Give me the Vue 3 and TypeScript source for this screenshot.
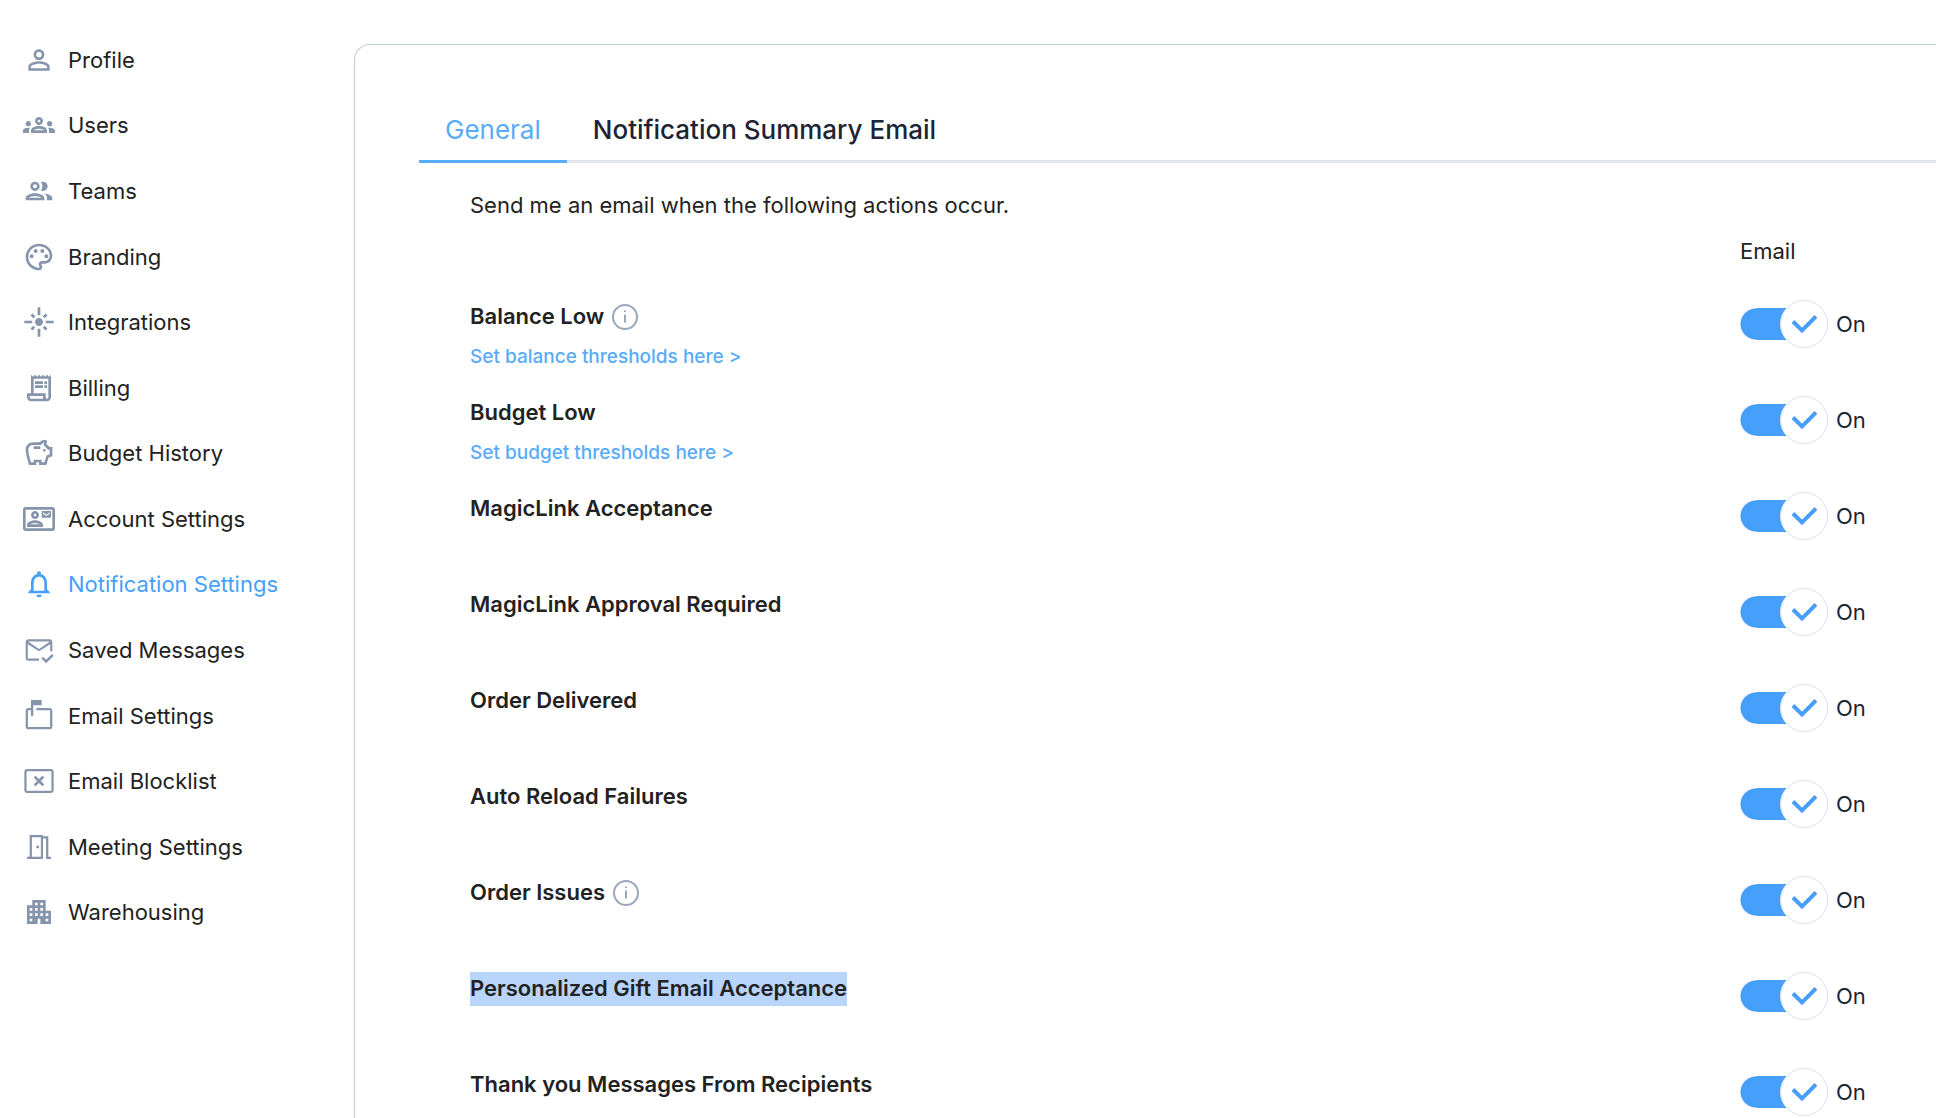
<script setup lang="ts">
import { ref } from 'vue'

interface NavItem {
  label: string
  paths: string[]
}

interface Setting {
  title: string
  link?: string
  info?: boolean
  selected?: boolean
  on: boolean
}

const activeNav = ref('Notification Settings')
const activeTab = ref('General')
const tabs = ['General', 'Notification Summary Email']

const navItems: NavItem[] = [
  {
    label: 'Profile',
    paths: [
      'M12 5.9c1.16 0 2.1.94 2.1 2.1s-.94 2.1-2.1 2.1S9.9 9.16 9.9 8s.94-2.1 2.1-2.1m0 9c2.97 0 6.1 1.46 6.1 2.1v1.1H5.9V17c0-.64 3.13-2.1 6.1-2.1M12 4C9.79 4 8 5.79 8 8s1.79 4 4 4 4-1.79 4-4-1.79-4-4-4zm0 9c-2.67 0-8 1.34-8 4v3h16v-3c0-2.66-5.33-4-8-4z',
    ],
  },
  {
    label: 'Users',
    paths: [
      'M4 13c1.1 0 2-.9 2-2s-.9-2-2-2-2 .9-2 2 .9 2 2 2zm1.13 1.1c-.37-.06-.74-.1-1.13-.1-.99 0-1.93.21-2.78.58C.48 14.9 0 15.62 0 16.43V18h4.5v-1.61c0-.83.23-1.61.63-2.29z',
      'M20 13c1.1 0 2-.9 2-2s-.9-2-2-2-2 .9-2 2 .9 2 2 2zm4 3.43c0-.81-.48-1.53-1.22-1.85-.85-.37-1.79-.58-2.78-.58-.39 0-.76.04-1.13.1.4.68.63 1.46.63 2.29V18H24v-1.57z',
      'M16.24 13.65c-1.17-.52-2.61-.9-4.24-.9-1.63 0-3.07.39-4.24.9C6.68 14.13 6 15.21 6 16.39V18h12v-1.61c0-1.18-.68-2.26-1.76-2.74zM8.07 16c.09-.23.13-.39.91-.69.97-.38 1.99-.56 3.02-.56s2.05.18 3.02.56c.77.3.81.46.91.69H8.07zM12 8c.55 0 1 .45 1 1s-.45 1-1 1-1-.45-1-1 .45-1 1-1m0-2c-1.66 0-3 1.34-3 3s1.34 3 3 3 3-1.34 3-3-1.34-3-3-3z',
    ],
  },
  {
    label: 'Teams',
    paths: [
      'M9 13.75c-2.34 0-7 1.17-7 3.5V19h14v-1.75c0-2.33-4.66-3.5-7-3.5zM4.34 17c.84-.58 2.87-1.25 4.66-1.25s3.82.67 4.66 1.25H4.34zM9 12c1.93 0 3.5-1.57 3.5-3.5S10.93 5 9 5 5.5 6.57 5.5 8.5 7.07 12 9 12zm0-5c.83 0 1.5.67 1.5 1.5S9.83 10 9 10s-1.5-.67-1.5-1.5S8.17 7 9 7z',
      'M16.04 13.81c1.16.84 1.96 1.96 1.96 3.44V19h4v-1.75c0-2.02-3.5-3.17-5.96-3.44zM15 12c1.93 0 3.5-1.57 3.5-3.5S16.93 5 15 5c-.54 0-1.04.13-1.5.35.63.89 1 1.98 1 3.15s-.37 2.26-1 3.15c.46.22.96.35 1.5.35z',
    ],
  },
  {
    label: 'Branding',
    paths: [
      'M12 22C6.49 22 2 17.51 2 12S6.49 2 12 2s10 4.04 10 9c0 3.31-2.69 6-6 6h-1.77c-.28 0-.5.22-.5.5 0 .12.05.23.13.33.41.47.64 1.06.64 1.67 0 1.38-1.12 2.5-2.5 2.5zm0-18c-4.41 0-8 3.59-8 8s3.59 8 8 8c.28 0 .5-.22.5-.5 0-.16-.08-.28-.14-.35-.41-.46-.63-1.05-.63-1.65 0-1.38 1.12-2.5 2.5-2.5H16c2.21 0 4-1.79 4-4 0-3.86-3.59-7-8-7z',
      'M5 11.5a1.5 1.5 0 1 0 3 0a1.5 1.5 0 1 0-3 0zM8 7.5a1.5 1.5 0 1 0 3 0a1.5 1.5 0 1 0-3 0zM13 7.5a1.5 1.5 0 1 0 3 0a1.5 1.5 0 1 0-3 0zM16 11.5a1.5 1.5 0 1 0 3 0a1.5 1.5 0 1 0-3 0z',
    ],
  },
  {
    label: 'Integrations',
    paths: [
      'M7 11H1v2h6v-2zm2.17-3.24L7.05 5.64 5.64 7.05l2.12 2.12 1.41-1.41zM13 1h-2v6h2V1zm5.36 6.05l-1.41-1.41-2.12 2.12 1.41 1.41 2.12-2.12zM17 11v2h6v-2h-6zm-5-2c-1.66 0-3 1.34-3 3s1.34 3 3 3 3-1.34 3-3-1.34-3-3-3zm2.83 7.24l2.12 2.12 1.41-1.41-2.12-2.12-1.41 1.41zm-9.19.71l1.41 1.41 2.12-2.12-1.41-1.41-2.12 2.12zM11 23h2v-6h-2v6z',
    ],
  },
  {
    label: 'Billing',
    paths: [
      'M19.5 3.5L18 2l-1.5 1.5L15 2l-1.5 1.5L12 2l-1.5 1.5L9 2 7.5 3.5 6 2v14H3v3c0 1.66 1.34 3 3 3h12c1.66 0 3-1.34 3-3V2l-1.5 1.5zM15 20H6c-.55 0-1-.45-1-1v-1h10v2zm4-1c0 .55-.45 1-1 1s-1-.45-1-1v-3H8V5h11v14z',
      'M9 7h6v2H9zM16 7h2v2h-2zM9 10h6v2H9zM16 10h2v2h-2z',
    ],
  },
  {
    label: 'Budget History',
    paths: [
      'M19.83 7.5l-2.27-2.27c.07-.42.18-.81.32-1.15.08-.18.12-.37.12-.58 0-.83-.67-1.5-1.5-1.5-1.64 0-3.09.79-4 2h-5C4.46 4 2 6.46 2 9.5S4.5 21 4.5 21H10v-2h2v2h5.5l1.68-5.59 2.82-.94V7.5h-2.17zM20 13.03l-2.31.77L16.01 19H14v-2H8v2H6.01C5.4 16.9 4 12.64 4 9.5 4 7.57 5.57 6 7.5 6h6c.55-.9 1.3-1.6 2.24-1.86-.16.64-.25 1.3-.24 1.96L18.9 9.5H20v3.53z',
      'M15 10a1 1 0 1 0 2 0a1 1 0 1 0-2 0zM8 7h5v2H8z',
    ],
  },
  {
    label: 'Account Settings',
    paths: [
      'M22 3H2C.9 3 0 3.9 0 5v14c0 1.1.9 2 2 2h20c1.1 0 2-.9 2-2V5c0-1.1-.9-2-2-2zm0 16H2V5h20v14z',
      'M21 6h-7v5h7V6zm-1 2l-2.5 1.75L15 8V7l2.5 1.75L20 7v1z',
      'M9 12c1.65 0 3-1.35 3-3s-1.35-3-3-3-3 1.35-3 3 1.35 3 3 3zm0-4c.55 0 1 .45 1 1s-.45 1-1 1-1-.45-1-1 .45-1 1-1zM15 16.59C15 14.09 11.03 13 9 13s-6 1.08-6 3.58V18h12v-1.41zM5.48 16c.74-.5 2.22-1 3.52-1s2.77.49 3.52 1H5.48z',
    ],
  },
  {
    label: 'Notification Settings',
    paths: [
      'M12 22c1.1 0 2-.9 2-2h-4c0 1.1.9 2 2 2zm6-6v-5c0-3.07-1.63-5.64-4.5-6.32V4c0-.83-.67-1.5-1.5-1.5s-1.5.67-1.5 1.5v.68C7.64 5.36 6 7.92 6 11v5l-2 2v1h16v-1l-2-2zm-2 1H8v-6c0-2.48 1.51-4.5 4-4.5s4 2.02 4 4.5v6z',
    ],
  },
  {
    label: 'Saved Messages',
    paths: [
      'M12 18.4H3.6V7.7l8.4 5.3 8.4-5.3V13H22V6c0-1.1-.9-2-2-2H4c-1.1 0-2 .9-2 2v12c0 1.1.9 2 2 2h8v-1.6zM20.2 5.6L12 11.2 3.8 5.6z',
      'M17.34 22l-3.54-3.54 1.3-1.3 2.24 2.24 4.35-4.35L23 16.34z',
    ],
  },
  {
    label: 'Email Settings',
    paths: [
      'M20 6H10v1.7h10.300v12.600H3.700V7.700H6V12h1.700V4H14V0H6v6H4c-1.100 0-2 .9-2 2v12c0 1.100.9 2 2 2h16c1.100 0 2-.9 2-2V8c0-1.100-.9-2-2-2z',
    ],
  },
  {
    label: 'Email Blocklist',
    paths: [
      'M21 3H3c-1.1 0-2 .9-2 2v14c0 1.1.9 2 2 2h18c1.1 0 2-.9 2-2V5c0-1.1-.9-2-2-2zm.3 16.300H2.700V4.700h18.600z',
      'M14.59 8L12 10.59 9.41 8 8 9.41 10.59 12 8 14.59 9.41 16 12 13.41 14.59 16 16 14.59 13.41 12 16 9.41z',
    ],
  },
  {
    label: 'Meeting Settings',
    paths: [
      'M19 19.400V4h-4V3H5v16.400H3V21h12V5.600h2.300V21H21v-1.600zm-5.600 0H6.700V4.600h6.700zM10 11h2v2h-2z',
    ],
  },
  {
    label: 'Warehousing',
    paths: [
      'M17 11V3H7v4H3v14h8v-4h2v4h8V11h-4zM7 19H5v-2h2v2zm0-4H5v-2h2v2zm0-4H5V9h2v2zm4 4H9v-2h2v2zm0-4H9V9h2v2zm0-4H9V5h2v2zm4 8h-2v-2h2v2zm0-4h-2V9h2v2zm0-4h-2V5h2v2zm4 12h-2v-2h2v2zm0-4h-2v-2h2v2z',
    ],
  },
]

const settings = ref<Setting[]>([
  { title: 'Balance Low', link: 'Set balance thresholds here >', info: true, on: true },
  { title: 'Budget Low', link: 'Set budget thresholds here >', on: true },
  { title: 'MagicLink Acceptance', on: true },
  { title: 'MagicLink Approval Required', on: true },
  { title: 'Order Delivered', on: true },
  { title: 'Auto Reload Failures', on: true },
  { title: 'Order Issues', info: true, on: true },
  { title: 'Personalized Gift Email Acceptance', selected: true, on: true },
  { title: 'Thank you Messages From Recipients', on: true },
])
</script>

<template>
  <div class="page">
    <nav class="sidebar" aria-label="Settings">
      <a
        v-for="item in navItems"
        :key="item.label"
        href="#"
        class="nav-link"
        :class="{ active: item.label === activeNav }"
        @click.prevent="activeNav = item.label"
      >
        <svg class="nav-icon" viewBox="0 0 24 24" fill-rule="evenodd" aria-hidden="true">
          <path v-for="(d, i) in item.paths" :key="i" :d="d" />
        </svg>
        <span>{{ item.label }}</span>
      </a>
    </nav>

    <main class="panel">
      <div class="tabs" role="tablist">
        <button
          v-for="tab in tabs"
          :key="tab"
          type="button"
          role="tab"
          class="tab"
          :class="{ active: tab === activeTab }"
          :aria-selected="tab === activeTab"
          @click="activeTab = tab"
        >
          {{ tab }}
        </button>
      </div>

      <section class="content">
        <p class="intro">Send me an email when the following actions occur.</p>
        <div class="column-head"><span class="control-col">Email</span></div>

        <ul class="settings">
          <li v-for="s in settings" :key="s.title" class="setting">
            <div class="setting-text">
              <div class="title-line">
                <span class="title" :class="{ selected: s.selected }">{{ s.title }}</span>
                <svg v-if="s.info" class="info" viewBox="0 0 26 26" aria-hidden="true">
                  <circle cx="13" cy="13" r="12" />
                  <path d="M13 10.5V18.5M13 6.5V8" />
                </svg>
              </div>
              <a v-if="s.link" href="#" class="threshold" @click.prevent>{{ s.link }}</a>
            </div>
            <label class="control-col switch">
              <input v-model="s.on" type="checkbox" role="switch" :aria-label="s.title" />
              <span class="track">
                <span class="knob">
                  <svg v-if="s.on" viewBox="0 0 26 26" aria-hidden="true">
                    <path d="M2 10.500L11 19.500 25 5.500" />
                  </svg>
                </span>
              </span>
              <span class="state">{{ s.on ? 'On' : 'Off' }}</span>
            </label>
          </li>
        </ul>
      </section>
    </main>
  </div>
</template>

<style>
body {
  background: #fff;
}
</style>

<style scoped>
.page {
  display: flex;
  align-items: stretch;
  height: 100vh;
  overflow: hidden;
  box-sizing: border-box;
  font-family: Inter, "Liberation Sans", sans-serif;
  font-size: 22px;
  line-height: 32px;
  color: #222;
}

.sidebar {
  flex: 0 0 354px;
  box-sizing: border-box;
  display: flex;
  flex-direction: column;
  align-self: flex-start;
  min-height: 945px;
  padding: 27px 16px 0 23px;
}

.nav-link {
  flex: 1;
  display: flex;
  align-items: center;
  gap: 13px;
  color: #222;
  text-decoration: none;
}

.nav-link.active {
  color: #469ffa;
}

.nav-icon {
  width: 32px;
  height: 32px;
  fill: #8695ab;
}

.nav-link.active .nav-icon {
  fill: #469ffa;
}

.panel {
  flex: 1;
  min-width: 0;
  margin-top: 44px;
  padding: 57px 0 0 64px;
  border: solid #c2cad8;
  border-width: 1px 0 0 1px;
  border-top-left-radius: 16px;
}

.tabs {
  display: flex;
  box-shadow: inset 0 -3px #e0e6ec;
}

.tab {
  padding: 11px 26px 14px;
  border: 0;
  border-bottom: 3px solid transparent;
  background: none;
  font: inherit;
  font-size: 26px;
  font-weight: 500;
  line-height: 33px;
  color: #1d2433;
  cursor: pointer;
}

.tab.active {
  border-bottom-color: #58acfa;
  font-weight: 400;
  color: #58acfa;
}

.content {
  padding-left: 51px;
}

.intro {
  margin: 0;
  padding-top: 26px;
}

.column-head {
  display: flex;
  justify-content: flex-end;
  padding: 14px 0 33px;
}

.control-col {
  flex: 0 0 196px;
}

.settings {
  margin: 0;
  padding: 0;
  list-style: none;
}

.setting {
  display: flex;
  align-items: flex-start;
  min-height: 96px;
}

.setting-text {
  flex: 1;
}

.title-line {
  display: flex;
  align-items: center;
  gap: 8px;
}

.title {
  padding-bottom: 2px;
  font-weight: 600;
}

.title.selected {
  background: #b9d5fb;
}

.info {
  width: 26px;
  height: 26px;
  fill: none;
  stroke: #9aa8bd;
  stroke-width: 2;
}

.threshold {
  display: block;
  padding-top: 8px;
  font-size: 19px;
  font-weight: 500;
  line-height: 30px;
  color: #58acfa;
  text-decoration: none;
}

.switch {
  position: relative;
  display: flex;
  align-items: center;
  gap: 8px;
  color: #1d2433;
  cursor: pointer;
}

.switch input {
  position: absolute;
  inset: 0;
  width: 88px;
  height: 48px;
  margin: 0;
  opacity: 0;
}

.track {
  display: flex;
  align-items: center;
  justify-content: flex-start;
  width: 88px;
  height: 48px;
  background: linear-gradient(#469ffa, #469ffa) 16px 8px / 40px 32px no-repeat,
    radial-gradient(circle at 16px 24px, #469ffa 15px, transparent 16px);
}

.switch input:checked + .track {
  justify-content: flex-end;
}

.knob {
  display: flex;
  align-items: center;
  justify-content: center;
  box-sizing: border-box;
  width: 48px;
  height: 48px;
  border: 1px solid #dde2ec;
  border-radius: 24px;
  background: #fff;
}

.knob svg {
  width: 26px;
  height: 26px;
  fill: none;
  stroke: #469ffa;
  stroke-width: 4;
}
</style>
